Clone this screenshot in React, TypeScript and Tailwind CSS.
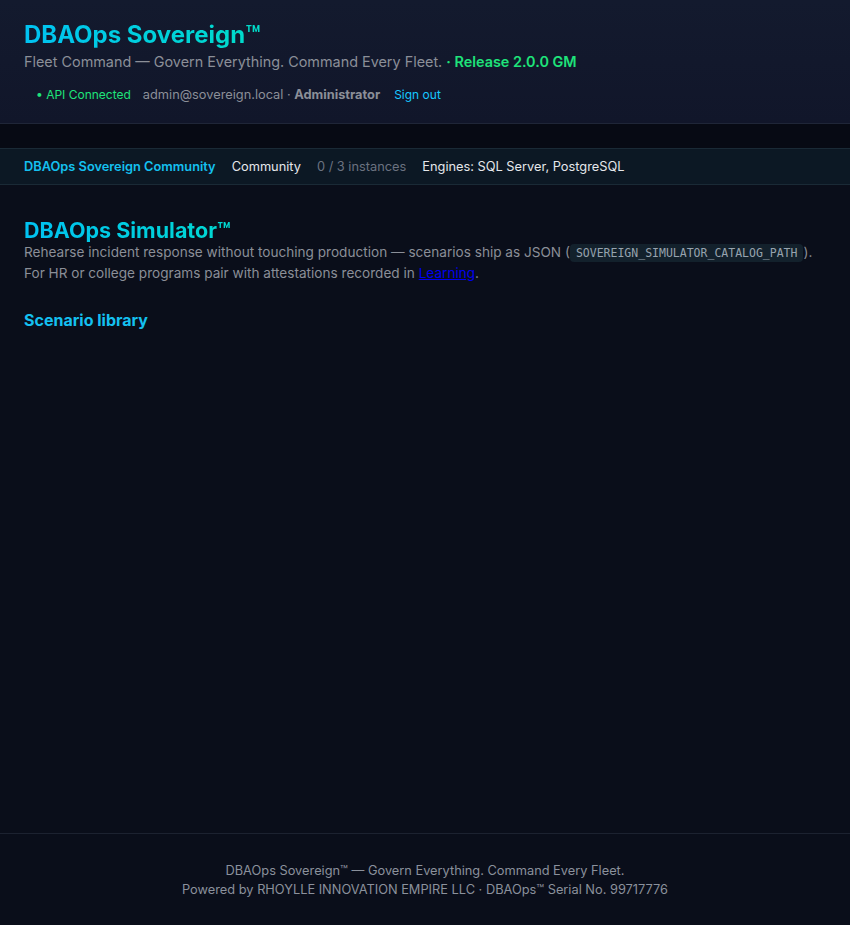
import React from "react";

export default function App() {
  return (
    <div className="min-h-screen flex flex-col bg-[#0a0e1a] text-[#9ca3af]" style={{ fontFamily: "Inter, 'Noto Sans', sans-serif" }}>
      <header className="bg-gradient-to-b from-[#131a2e] to-[#11162a] border-b border-[#1f2638] px-6 pt-[19px] pb-[19px]">
        <h1 className="text-[24px] leading-[32px] font-bold bg-gradient-to-r from-[#00c2f2] to-[#00dcc8] bg-clip-text text-transparent w-fit">
          DBAOps Sovereign™
        </h1>
        <p className="mt-[1px] text-[14.4px] leading-[20px] text-[#8b8f98]">
          Fleet Command — Govern Everything. Command Every Fleet. <span className="text-[#1ee37a] font-semibold">· Release 2.0.0 GM</span>
        </p>
        <div className="mt-[14px] ml-3 flex items-center gap-3 text-[12.8px] leading-[18px]">
          <span className="text-[#1ee37a] text-[12px]">• API Connected</span>
          <span className="text-[#8b8f98]">
            admin@sovereign.local · <span className="font-bold">Administrator</span>
          </span>
          <a className="ml-[2px] text-[12px] text-[#16c8ff]">Sign out</a>
        </div>
      </header>
      <div className="h-6 bg-[#070a14]"></div>
      <div className="h-[37px] flex items-center gap-4 px-6 bg-[#0c1824] border-y border-[#1a2a36] text-[12.8px]">
        <span className="text-[#14c0f0] font-semibold">DBAOps Sovereign Community</span>
        <span className="text-[#e5e7eb]">Community</span>
        <span className="text-[#6b7280]">0 / 3 instances</span>
        <span className="text-[#e5e7eb]">Engines: SQL Server, PostgreSQL</span>
      </div>
      <main className="flex-1 px-6 pt-[33px]">
        <h2 className="text-[21.5px] leading-[24px] font-bold bg-gradient-to-r from-[#00c2f2] to-[#00d8d0] bg-clip-text text-transparent w-fit">
          DBAOps Simulator™
        </h2>
        <p className="text-[13.6px] leading-[20px] text-[#8b8f98]">
          Rehearse incident response without touching production — scenarios ship as JSON (
          <code className="px-1.5 py-[2px] rounded bg-[#13212c] text-[#97a3ae] text-[11.5px]" style={{ fontFamily: "'DejaVu Sans Mono', monospace" }}>
            SOVEREIGN_SIMULATOR_CATALOG_PATH
          </code>
          ).
          <br />
          For HR or college programs pair with attestations recorded in <a className="text-[#0000ee] underline">Learning</a>.
        </p>
        <h3 className="mt-[25px] text-[16px] leading-[24px] font-bold text-[#14c0f0]">Scenario library</h3>
      </main>
      <footer className="border-t border-[#1c2230] pt-[27px] pb-[26px] text-center text-[12.8px] leading-[19px] text-[#8b919c]">
        <p>DBAOps Sovereign™ — Govern Everything. Command Every Fleet.</p>
        <p>Powered by RHOYLLE INNOVATION EMPIRE LLC · DBAOps™ Serial No. 99717776</p>
      </footer>
    </div>
  );
}
